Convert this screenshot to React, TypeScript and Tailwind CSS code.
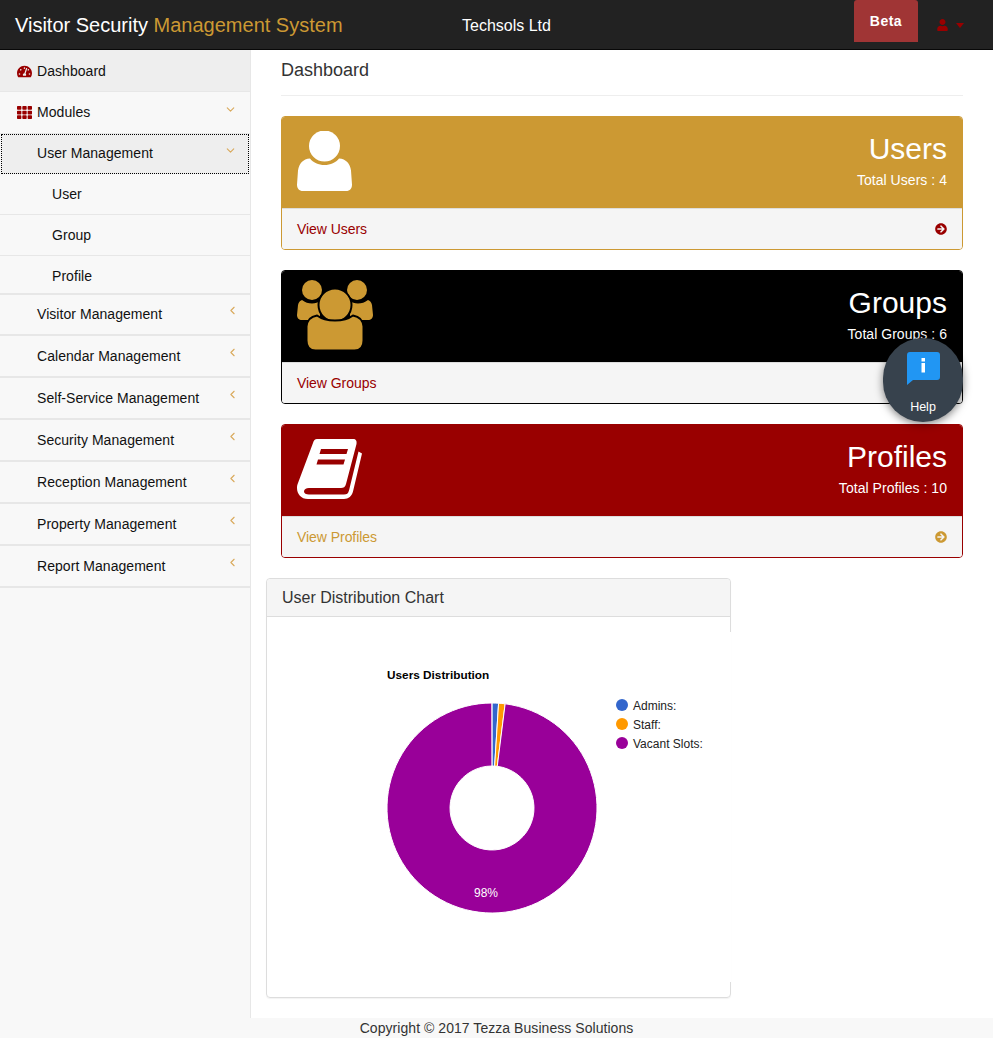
import React from "react";
import { FaTachometerAlt, FaTh, FaUser, FaArrowCircleRight } from "react-icons/fa";
import { ChevronDown, ChevronLeft } from "lucide-react";

function UserIcon() {
  return (
    <svg width="55" height="60" viewBox="0 0 55 60" className="block">
      <circle cx="27.500" cy="15" r="15.500" fill="#fff" />
      <path d="M13 27.500c3 4 8.500 6.500 14.500 6.500s11.500-2.500 14.500-6.500c7 .5 11 5 12 12l1 14c0 4-2 6.500-6 6.500H6c-4 0-6-2.500-6-6.500l1-14c1-7 5-11.500 12-12z" fill="#fff" />
    </svg>
  );
}

function GroupIcon() {
  return (
    <svg width="76" height="71" viewBox="0 0 76 71" className="block text-[#cc9933]" fill="currentColor">
      <circle cx="15" cy="10" r="10" />
      <circle cx="60" cy="10" r="10" />
      <path d="M5 20c3 2.500 6.500 3.500 10 3.500s6-1 8-2.500v19H5c-3 0-5-2-5-5l1-10c.5-2.500 2-4.500 4-5z" />
      <path d="M71 20c-3 2.500-6.500 3.500-10 3.500s-6-1-8-2.500v19h18c3 0 5-2 5-5l-1-10c-.5-2.500-2-4.500-4-5z" />
      <circle cx="38" cy="25" r="16.500" stroke="#000" strokeWidth="2" />
      <path d="M20 35.500c4 3 11 5 18 5s14-2 18-5c6 1 10 5 10.500 11v14c0 6-3.500 10-9 10h-39c-5.500 0-9-4-9-10v-14c.5-6 4.500-10 10.500-11z" stroke="#000" strokeWidth="2" />
    </svg>
  );
}

function BookIcon() {
  return (
    <svg width="66" height="62" viewBox="0 0 66 62" className="block">
      <path fillRule="evenodd" fill="#fff" d="M20 1h36c3 0 4 2 3.500 5L49 46c-.8 3-2.500 4-5 4H12c-3 0-5 1.500-5 3.500s2 3 5 3h35c3 0 4-1 5-4l9.500-39 3.500 2-9 38c-1 4.500-4.500 7.500-9 7.500H11C4 61 0 56 0 50c0-2 .3-3.500 1-5L16 5c.7-2.500 2-4 4-4zM24 11l-1.500 5h27l1.500-5zM21 21.500l-1.500 5h27l1.500-5z" />
    </svg>
  );
}

function Panel({
  title, sub, link, linkClass, border, head, icon, iconTop,
}: { title: string; sub: string; link: string; linkClass: string; border: string; head: string; icon: React.ReactNode; iconTop: string }) {
  return (
    <div className={`mb-5 rounded border ${border} overflow-hidden`}>
      <div className={`${head} h-[91px] flex justify-between px-[15px] text-white`}>
        <div className={iconTop}>{icon}</div>
        <div className="text-right pt-[14px]">
          <div className="text-[30px] leading-[35px]">{title}</div>
          <div className="text-[14px] leading-5 mt-[4px] tracking-[0.04px]">{sub}</div>
        </div>
      </div>
      <div className="bg-[#f5f5f5] h-[41px] flex items-center justify-between px-[15px] border-t border-[#dddddd]">
        <span className={`text-[14px] tracking-[-0.05px] ${linkClass}`}>{link}</span>
        <FaArrowCircleRight className={`w-3 h-3 ${linkClass}`} />
      </div>
    </div>
  );
}

const plain = ["Visitor Management", "Calendar Management", "Self-Service Management", "Security Management", "Reception Management", "Property Management", "Report Management"];

function Sidebar() {
  return (
    <aside className="w-[251px] shrink-0 bg-[#f8f8f8] border-r border-[#e7e7e7] text-[14px] text-[#111] tracking-[0.05px] h-[968px]">
      <div className="h-[42px] bg-[#eeeeee] border-b border-[#e7e7e7] flex items-center pl-[17px] pt-[2px] gap-[5px]">
        <FaTachometerAlt className="w-[15px] h-[15px] text-[#990000]" />
        <span>Dashboard</span>
      </div>
      <div className="h-[42px] border-b border-[#e7e7e7] flex items-center pl-[17px] gap-[5px] relative">
        <FaTh className="w-[15px] h-[15px] text-[#990000]" />
        <span>Modules</span>
        <ChevronDown className="absolute right-[13px] top-[11px] w-[13px] h-[13px] text-[#d9a95b]" strokeWidth={2} />
      </div>
      <div className="h-[40px] bg-[#eeeeee] border border-dotted border-black mx-px flex items-center pl-[35px] pb-[2px] relative">
        <span>User Management</span>
        <ChevronDown className="absolute right-[11px] top-[9px] w-[13px] h-[13px] text-[#d9a95b]" strokeWidth={2} />
      </div>
      <div className="h-[41px] border-b border-[#e7e7e7] flex items-center pl-[52px]">User</div>
      <div className="h-[41px] border-b border-[#e7e7e7] flex items-center pl-[52px]">Group</div>
      <div className="h-[37px] flex items-center pl-[52px] pt-[4px]">Profile</div>
      <div className="border-t-2 border-[#e7e7e7]">
        {plain.map((t, i) => (
          <div key={t} className={`${i === 0 ? "h-[41px]" : "h-[42px]"} border-b-2 border-[#e7e7e7] flex items-center pl-[37px] relative`}>
            <span>{t}</span>
            <ChevronLeft className={`absolute right-[11px] ${i === 0 ? "top-[9px]" : "top-[10px]"} w-[13px] h-[13px] text-[#d9a95b]`} strokeWidth={2} />
          </div>
        ))}
      </div>
    </aside>
  );
}

function Donut() {
  const cx = 225, cy = 176, R = 105, r = 42;
  const pt = (rad: number, deg: number) => {
    const a = ((deg - 90) * Math.PI) / 180;
    return `${cx + rad * Math.cos(a)} ${cy + rad * Math.sin(a)}`;
  };
  const slice = (a: number, b: number) =>
    `M${pt(R, a)}A${R} ${R} 0 ${b - a > 180 ? 1 : 0} 1 ${pt(R, b)}L${pt(r, b)}A${r} ${r} 0 ${b - a > 180 ? 1 : 0} 0 ${pt(r, a)}Z`;
  return (
    <svg width="465" height="350" viewBox="0 0 465 350" className="block" fontFamily="'Liberation Sans', Arial, sans-serif">
      <text x="120" y="47" fontSize="11.8" fontWeight="700" fill="#000">Users Distribution</text>
      <path d={slice(0, 3.6)} fill="#3366cc" stroke="#fff" strokeWidth="1" />
      <path d={slice(3.6, 7.2)} fill="#ff9900" stroke="#fff" strokeWidth="1" />
      <path d={slice(7.2, 359.9)} fill="#990099" stroke="#fff" strokeWidth="1" />
      <text x="219" y="265" fontSize="12" fill="#fff" textAnchor="middle">98%</text>
      <circle cx="355" cy="73" r="6" fill="#3366cc" />
      <text x="366" y="78" fontSize="12" fill="#222">Admins:</text>
      <circle cx="355" cy="92" r="6" fill="#ff9900" />
      <text x="366" y="97" fontSize="12" fill="#222">Staff:</text>
      <circle cx="355" cy="111" r="6" fill="#990099" />
      <text x="366" y="116" fontSize="12" fill="#222">Vacant Slots:</text>
    </svg>
  );
}

export default function App() {
  return (
    <div className="w-[993px] h-[1038px] bg-white relative overflow-hidden font-['Liberation_Sans',Arial,sans-serif] flex flex-col">
      <header className="h-[50px] shrink-0 bg-[#222222] border-b border-[#080808] flex items-center text-white relative">
        <div className="pl-[15px] w-[462px] text-[20px] whitespace-nowrap">
          Visitor Security <span className="text-[#cc9933]">Management System</span>
        </div>
        <div className="text-[16px] pt-[2px]">Techsols Ltd</div>
        <div className="ml-auto flex self-start">
          <div className="w-[64px] h-[42px] bg-[#a03535] rounded-t-[3px] flex items-center justify-center text-[14px] font-bold tracking-[0.5px]">Beta</div>
          <div className="w-[75px] h-[50px] flex items-center pl-[19px] gap-[8px] text-[#990000]">
            <FaUser className="w-[11px] h-[12px]" />
            <svg width="8" height="5" viewBox="0 0 8 5" className="block"><path d="M0 0h8L4 5z" fill="currentColor" /></svg>
          </div>
        </div>
      </header>

      <div className="flex flex-1">
        <Sidebar />
        <main className="flex-1 px-[15px]">
          <div className="mx-[15px]">
            <div className="h-[46px] border-b border-[#eeeeee] mb-5 text-[18px] text-[#333] pt-[8px] leading-6">Dashboard</div>
            <Panel title="Users" sub="Total Users : 4" link="View Users" linkClass="text-[#990000]" border="border-[#cc9933]" head="bg-[#cc9933]" iconTop="pt-[14px]" icon={<UserIcon />} />
            <Panel title="Groups" sub="Total Groups : 6" link="View Groups" linkClass="text-[#990000]" border="border-black" head="bg-black" iconTop="pt-[9px]" icon={<GroupIcon />} />
            <Panel title="Profiles" sub="Total Profiles : 10" link="View Profiles" linkClass="text-[#cc9933]" border="border-[#990000]" head="bg-[#990000]" iconTop="pt-[13px]" icon={<BookIcon />} />
          </div>
          <div className="w-[465px] h-[420px] rounded border border-[#dddddd] shadow-[0_1px_1px_rgba(0,0,0,0.05)]">
            <div className="h-[38px] bg-[#f5f5f5] border-b border-[#dddddd] rounded-t px-[15px] flex items-center text-[16px] text-[#333]">User Distribution Chart</div>
            <div className="mt-[15px] h-[350px] w-[464px] bg-white">
              <Donut />
            </div>
          </div>
        </main>
      </div>

      <footer className="h-[20px] shrink-0 bg-[#f8f8f8] text-[14px] text-[#333] text-center leading-5 tracking-[0.05px]">Copyright © 2017 Tezza Business Solutions</footer>

      <div className="absolute left-[883px] top-[338px] w-[80px] h-[84px] rounded-full bg-[#37424d] shadow-[0_2px_8px_rgba(0,0,0,0.5)] flex flex-col items-center text-white">
        <svg width="33" height="33" viewBox="0 0 33 33" className="mt-[14px]">
          <path d="M3 0h27a3 3 0 0 1 3 3v22a3 3 0 0 1-3 3H6l-6 5V3a3 3 0 0 1 3-3z" fill="#2196f3" />
          <rect x="14.500" y="6" width="3.500" height="3.500" fill="#fff" />
          <rect x="14.500" y="11" width="3.500" height="9.500" fill="#fff" />
        </svg>
        <span className="text-[12.500px] mt-[14px] leading-4">Help</span>
      </div>
    </div>
  );
}
